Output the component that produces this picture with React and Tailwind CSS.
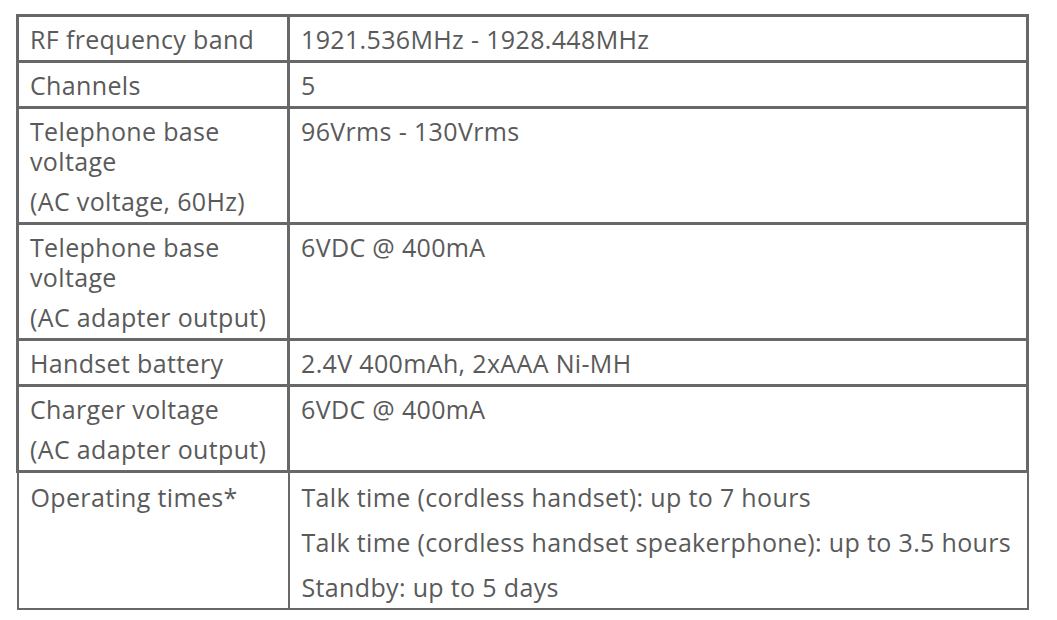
const rows = [
  { label: [['RF frequency band']], value: [['1921.536MHz - 1928.448MHz']] },
  { label: [['Channels']], value: [['5']] },
  { label: [['Telephone base', 'voltage'], ['(AC voltage, 60Hz)']], value: [['96Vrms - 130Vrms']] },
  { label: [['Telephone base', 'voltage'], ['(AC adapter output)']], value: [['6VDC @ 400mA']] },
  { label: [['Handset battery']], value: [['2.4V 400mAh, 2xAAA Ni-MH']] },
  { label: [['Charger voltage'], ['(AC adapter output)']], value: [['6VDC @ 400mA']] },
];

const times = [
  'Talk time (cordless handset): up to 7 hours',
  'Talk time (cordless handset speakerphone): up to 3.5 hours',
  'Standby: up to 5 days',
];

function Cell({ paras }) {
  return (
    <div className="space-y-[10px]">
      {paras.map((lines, i) => (
        <p key={i}>
          {lines.map((l, j) => (
            <span key={j} className="block">{l}</span>
          ))}
        </p>
      ))}
    </div>
  );
}

export default function App() {
  return (
    <div
      className="bg-white w-[1057px] h-[620px] pt-[14px] pl-[16px] text-[#5a5a5a] text-[25px] leading-[30px] tracking-[0.35px]"
      style={{ fontFamily: '"Open Sans", "Noto Sans", sans-serif' }}
    >
      <table className="w-[1013px] border-collapse">
        <colgroup>
          <col className="w-[271px]" />
          <col />
        </colgroup>
        <tbody>
          {rows.map((r, i) => (
            <tr key={i}>
              <td className="border-[3px] border-[#686868] align-top pl-[11px] pr-2 pt-[7px] pb-[6px]">
                <Cell paras={r.label} />
              </td>
              <td className="border-[3px] border-[#686868] align-top pl-[11px] pr-2 pt-[7px] pb-[6px]">
                <Cell paras={r.value} />
              </td>
            </tr>
          ))}
          <tr>
            <td className="border-2 border-[#686868] align-top pl-[12px] pr-2 pt-[9px] pb-[6px]">
              Operating times*
            </td>
            <td className="border-2 border-[#686868] align-top pl-[12px] pr-0 pt-[9px] pb-[6px]">
              <div className="space-y-[15px] whitespace-nowrap">
                {times.map((t) => (
                  <p key={t}>{t}</p>
                ))}
              </div>
            </td>
          </tr>
        </tbody>
      </table>
    </div>
  );
}
